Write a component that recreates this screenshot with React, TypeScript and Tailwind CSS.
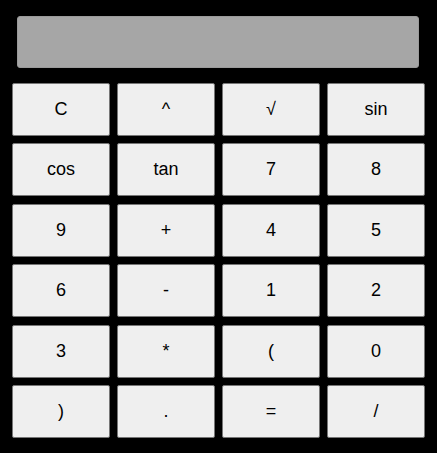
const keys = [
  "C", "^", "√", "sin",
  "cos", "tan", "7", "8",
  "9", "+", "4", "5",
  "6", "-", "1", "2",
  "3", "*", "(", "0",
  ")", ".", "=", "/",
];

export default function App() {
  return (
    <div
      className="w-[437px] h-[453px] bg-black overflow-hidden"
      style={{ fontFamily: '"Liberation Sans", Arial, sans-serif' }}
    >
      <div className="pt-[16px] pl-[17px]">
        <div className="w-[402px] h-[52px] bg-[#a6a6a6] rounded-[3px] border border-[#9a9a9a]" />
      </div>
      <div className="mt-[15px] px-[12px] grid grid-cols-4 gap-x-[7px] gap-y-[7.4px]">
        {keys.map((k) => (
          <button
            key={k}
            className="h-[53px] bg-[#efefef] border border-[#767676] rounded-[2px] text-[18px] text-black"
          >
            {k}
          </button>
        ))}
      </div>
    </div>
  );
}
